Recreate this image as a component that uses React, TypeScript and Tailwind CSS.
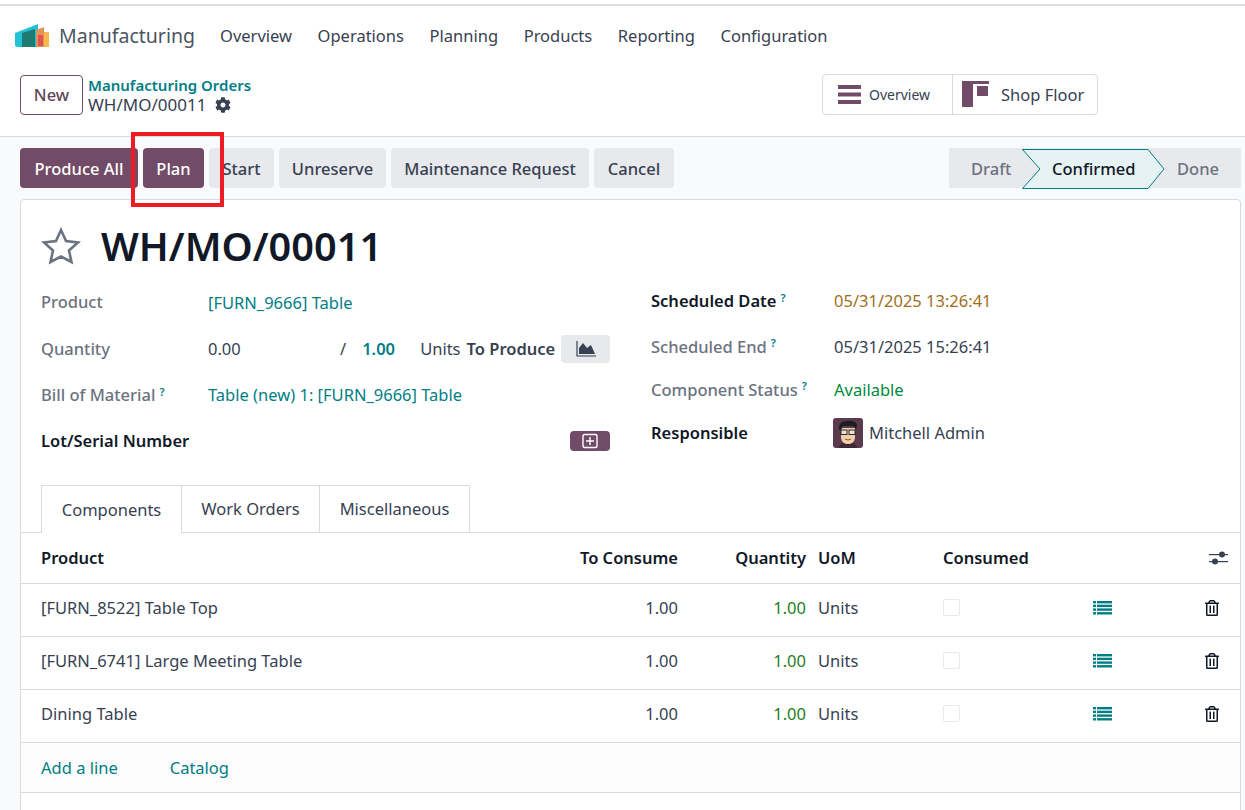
import { FaCog, FaRegTrashAlt } from "react-icons/fa"

const teal = "text-[#017e84]"

function Logo() {
  return (
    <svg width="36" height="24" viewBox="0 0 36 24">
      <path d="M0 9 L23 0 V23 H2 Q0 23 0 21 Z" fill="#22c1d6" />
      <path d="M7 9 L20 5 V23 H7 Z" fill="#1f7a72" />
      <path d="M21 6 L29 3 L29 23 H21 Z" fill="#e0935a" />
      <path d="M29 8 L34 8 V23 H29 Z" fill="#f6b84f" />
      <path d="M23 11 H28 V22 H23 Z" fill="#e2404a" opacity="0.75" />
    </svg>
  )
}

function Avatar() {
  return (
    <svg width="30" height="30" viewBox="0 0 30 30" className="rounded-[3px]">
      <rect width="30" height="30" fill="#5b3a4e" />
      <path d="M6 30 Q7 24 15 24 Q23 24 24 30 Z" fill="#3a2a35" />
      <path d="M8 10 H22 V20 Q21 26 15 26 Q9 26 8 20 Z" fill="#f3cfa8" />
      <path d="M6 12 Q5 3 14 3 Q24 2 24 8 L23 11 L20 8 H10 L8 12 Z" fill="#1e1e22" />
      <rect x="8" y="12" width="6" height="4.5" fill="#e8e2d8" stroke="#2b2b2b" strokeWidth="1" />
      <rect x="16" y="12" width="6" height="4.5" fill="#e8e2d8" stroke="#2b2b2b" strokeWidth="1" />
      <path d="M12 21 Q15 23 18 21" stroke="#8a5a3c" strokeWidth="1" fill="none" />
    </svg>
  )
}

function ListIcon({ className }: { className?: string }) {
  return (
    <svg width="19" height="15" viewBox="0 0 19 15" className={className} fill="currentColor">
      <rect x="0" y="1" width="3" height="2.4" />
      <rect x="4" y="1" width="15" height="2.4" />
      <rect x="0" y="4.7" width="3" height="2.4" />
      <rect x="4" y="4.7" width="15" height="2.4" />
      <rect x="0" y="8.4" width="3" height="2.4" />
      <rect x="4" y="8.4" width="15" height="2.4" />
      <rect x="0" y="12.1" width="3" height="2.4" />
      <rect x="4" y="12.1" width="15" height="2.4" />
    </svg>
  )
}

function StarIcon() {
  return (
    <svg width="40" height="38" viewBox="0 0 40 38" fill="none" stroke="#6b7280" strokeWidth="2.6">
      <path d="M20 3 L25 14 L37 15.5 L28 23.5 L30.5 35 L20 29.5 L9.5 35 L12 23.5 L3 15.5 L15 14 Z" />
    </svg>
  )
}

function SliderIcon() {
  return (
    <svg width="19" height="16" viewBox="0 0 19 16" fill="#374151">
      <rect x="0" y="4" width="19" height="1.2" />
      <rect x="0" y="11" width="19" height="1.2" />
      <circle cx="13" cy="4.5" r="3" />
      <circle cx="6" cy="11.5" r="3" />
    </svg>
  )
}

function Help() {
  return <sup className={`ml-1 text-[11px] font-semibold ${teal}`}>?</sup>
}

const rows = ["[FURN_8522] Table Top", "[FURN_6741] Large Meeting Table", "Dining Table"]
const gridCols = "grid grid-cols-[539px_118px_128px_137px_127px_65px_1fr] items-center"

export default function App() {
  return (
    <div className="relative h-[810px] w-[1245px] overflow-hidden bg-[#f9fafb] font-['Noto_Sans',sans-serif] text-[16.5px] leading-[24px] text-[#374151]">
      <div className="bg-white pt-[4px]">
        <div className="h-[2px] bg-[#e0e0e0]" />
        <nav className="flex h-[60px] items-center pl-[15px]">
          <Logo />
          <span className="ml-[8px] w-[161px] text-[19.5px] text-[#4b5563]">Manufacturing</span>
          <div className="flex gap-[25.6px] text-[#374151]">
            <span>Overview</span>
            <span>Operations</span>
            <span>Planning</span>
            <span>Products</span>
            <span>Reporting</span>
            <span>Configuration</span>
          </div>
        </nav>
        <div className="flex h-[71px] items-start border-b border-[#d8dadd] pl-[20px] pt-[8px]">
          <button className="mt-[1px] h-[40px] w-[63px] rounded-[4px] border border-[#714b67] font-medium text-[#5f4658]">
            New
          </button>
          <div className="ml-[5px] w-[170px] pt-[1px] leading-[20px]">
            <div className={`text-[15px] font-semibold ${teal}`}>Manufacturing Orders</div>
            <div className="flex items-center gap-[9px]">
              <span className="text-[17px]">WH/MO/00011</span>
              <FaCog size={16} color="#374151" />
            </div>
          </div>
          <div className="ml-[564px] flex h-[41px] w-[276px] rounded-[4px] border border-[#d8dadd]">
            <div className="flex w-[130px] items-center border-r border-[#d8dadd] pl-[15px] text-[14px]">
              <svg width="23" height="19" viewBox="0 0 23 19" fill="#714b67">
                <rect width="23" height="4" />
                <rect y="7.5" width="23" height="4" />
                <rect y="15" width="23" height="4" />
              </svg>
              <span className="ml-[8px]">Overview</span>
            </div>
            <div className="flex flex-1 items-center pl-[9px]">
              <svg width="27" height="27" viewBox="0 0 27 27" fill="#714b67">
                <rect width="27" height="3" />
                <rect y="3" width="11" height="23" />
                <rect x="15" y="5" width="11" height="10" />
              </svg>
              <span className="ml-[12px]">Shop Floor</span>
            </div>
          </div>
        </div>
      </div>

      <div className="flex items-start justify-between pl-[20px] pr-[4px] pt-[11px]">
        <div className="flex gap-[5px] font-medium">
          <button className="h-[40px] w-[118px] rounded-[4px] bg-[#714b67] pt-[1px] text-white">Produce All</button>
          <button className="h-[40px] w-[61px] rounded-[4px] bg-[#714b67] pt-[1px] text-white">Plan</button>
          <button className="h-[40px] w-[65px] rounded-[4px] bg-[#e7e9ed] pt-[1px]">Start</button>
          <button className="h-[40px] w-[107px] rounded-[4px] bg-[#e7e9ed] pt-[1px]">Unreserve</button>
          <button className="h-[40px] w-[198px] rounded-[4px] bg-[#e7e9ed] pt-[1px]">Maintenance Request</button>
          <button className="h-[40px] w-[80px] rounded-[4px] bg-[#e7e9ed] pt-[1px]">Cancel</button>
        </div>
        <div className="flex h-[40px] w-[292px] items-center bg-[#e7e9ed] pt-[1px] font-medium">
          <span className="w-[73px] pl-[22px] text-[#6b7280]">Draft</span>
          <div className="relative -mt-[1px] flex h-full w-[143px] items-center">
            <svg className="absolute inset-0" width="143" height="40" viewBox="0 0 143 40">
              <path d="M0.5 0.5 H126 L142 20 L126 39.5 H0.5 L18 20 Z" fill="#e6f2f3" stroke="#017e84" />
            </svg>
            <span className="relative pl-[30px] pt-[1px] text-[#111827]">Confirmed</span>
          </div>
          <span className="pl-[12px] text-[#6b7280]">Done</span>
        </div>
      </div>

      <div className="ml-[20px] mr-[4px] mt-[11px] h-[640px] rounded-t-[4px] border border-[#d8dadd] bg-white">
        <div className="flex items-center pl-[20px] pt-[21px]">
          <StarIcon />
          <h1 className="ml-[20px] text-[39.7px] font-semibold leading-[50px] text-[#111827]">WH/MO/00011</h1>
        </div>

        <div className="mt-[9px] flex pl-[20px]">
          <div className="w-[569px]">
            <div className="flex h-[46px] items-center">
              <span className="-mt-[2px] w-[167px] font-medium text-[#6b7280]">Product</span>
              <span className={teal}>[FURN_9666] Table</span>
            </div>
            <div className="flex h-[46px] items-center">
              <span className="w-[167px] font-medium text-[#6b7280]">Quantity</span>
              <span className="w-[132px]">0.00</span>
              <span>/</span>
              <span className={`ml-[16px] w-[58px] font-semibold ${teal}`}>1.00</span>
              <span>Units</span>
              <span className="ml-[6px] font-semibold">To Produce</span>
              <span className="ml-auto flex h-[28px] w-[49px] items-center justify-center rounded-[4px] bg-[#e7e9ed]">
                <svg width="20" height="16" viewBox="0 0 20 16" fill="#374151">
                  <path d="M1 0 V15 H20" fill="none" stroke="#374151" strokeWidth="1.2" />
                  <path d="M3 13 V7 L7 2 L11 7 L15 4 L19 13 Z" />
                </svg>
              </span>
            </div>
            <div className="flex h-[46px] items-center">
              <span className="w-[167px] font-medium text-[#6b7280]">
                Bill of Material<Help />
              </span>
              <span className={teal}>Table (new) 1: [FURN_9666] Table</span>
            </div>
            <div className="flex h-[46px] items-center">
              <span className="font-semibold text-[#111827]">Lot/Serial Number</span>
              <span className="ml-auto flex h-[20px] w-[40px] items-center justify-center rounded-[4px] bg-[#714b67]">
                <svg width="16" height="16" viewBox="0 0 16 16" fill="none" stroke="white" strokeWidth="1.4">
                  <rect x="1" y="1.5" width="14" height="13" rx="1.5" />
                  <path d="M8 4 V12 M4 8 H12" />
                </svg>
              </span>
            </div>
          </div>
          <div className="ml-[41px] -mt-[3px]">
            <div className="flex h-[48px] items-center">
              <span className="w-[183px] font-semibold text-[#111827]">
                Scheduled Date<Help />
              </span>
              <span className="text-[#a16f1a]">05/31/2025 13:26:41</span>
            </div>
            <div className="flex h-[43px] items-center">
              <span className="w-[183px] font-medium text-[#6b7280]">
                Scheduled End<Help />
              </span>
              <span>05/31/2025 15:26:41</span>
            </div>
            <div className="flex h-[43px] items-center">
              <span className="w-[183px] font-medium text-[#6b7280]">
                Component Status<Help />
              </span>
              <span className="text-[#008a3c]">Available</span>
            </div>
            <div className="flex h-[43px] items-center">
              <span className="w-[182px] font-semibold text-[#111827]">Responsible</span>
              <Avatar />
              <span className="ml-[6px]">Mitchell Admin</span>
            </div>
          </div>
        </div>

        <div className="mt-[21px] flex h-[48px] border-b border-[#d8dadd] pl-[20px]">
          <div className="-mb-px flex w-[141px] items-center justify-center border border-b-0 border-[#d8dadd] bg-white">
            Components
          </div>
          <div className="flex w-[138px] items-center justify-center border-r border-t border-[#d8dadd]">
            Work Orders
          </div>
          <div className="flex w-[150px] items-center justify-center border-r border-t border-[#d8dadd]">
            Miscellaneous
          </div>
        </div>

        <div className={`${gridCols} h-[51px] border-b border-[#d8dadd] font-semibold text-[#111827]`}>
          <span className="pl-[20px]">Product</span>
          <span className="text-right">To Consume</span>
          <span className="text-right">Quantity</span>
          <span className="pl-[12px]">UoM</span>
          <span>Consumed</span>
          <span />
          <span className="flex justify-end pr-[12px]">
            <SliderIcon />
          </span>
        </div>
        {rows.map((row) => (
          <div key={row} className={`${gridCols} h-[53px] border-b border-[#d8dadd] pb-[5px]`}>
            <span className="pl-[20px]">{row}</span>
            <span className="text-right">1.00</span>
            <span className="text-right text-[#1e7e1e]">1.00</span>
            <span className="pl-[12px]">Units</span>
            <span className="h-[17px] w-[17px] rounded-[2px] border border-[#e7e9ed]" />
            <span className="flex justify-center">
              <ListIcon className={teal} />
            </span>
            <span className="flex justify-end pr-[20px]">
              <FaRegTrashAlt size={16} color="#111827" />
            </span>
          </div>
        ))}
        <div className={`flex h-[50px] items-center gap-[52px] border-b border-[#d8dadd] bg-[#fcfcfd] pl-[20px] ${teal}`}>
          <span>Add a line</span>
          <span>Catalog</span>
        </div>
      </div>

      <div className="absolute left-[131px] top-[132px] h-[75px] w-[93px] border-[4px] border-[#ed1c24]" />
    </div>
  )
}
